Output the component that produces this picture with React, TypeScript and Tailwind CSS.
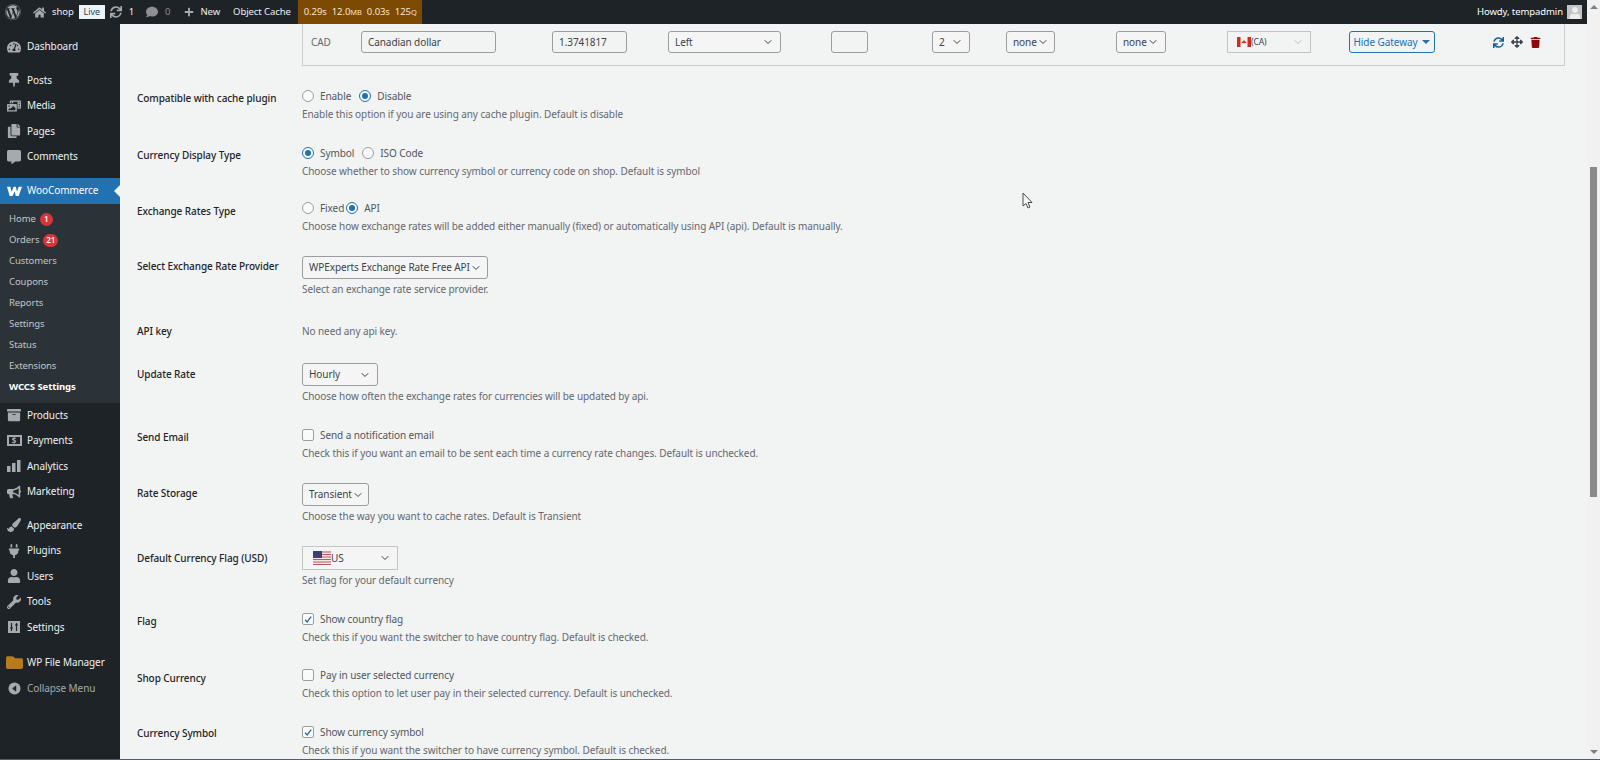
import React from 'react';
import {
  FaWordpress, FaHome, FaSync, FaComment, FaPlus, FaTachometerAlt, FaThumbtack, FaPhotoVideo, FaCopy,
  FaCommentAlt, FaArchive, FaBullhorn, FaPaintBrush, FaPlug, FaUser, FaWrench, FaFolder, FaArrowsAlt, FaTrash,
} from 'react-icons/fa';
import { ChevronDown } from 'lucide-react';

const font = "font-['Noto_Sans','Open_Sans',sans-serif]";

function WooIcon() {
  return (
    <svg viewBox="0 0 18 12" className="w-[15px] h-[10px]" fill="#fff">
      <path d="M0 1 L4 1 L5.5 7 L8 1 L10.6 1 L12 7 L14 1 L18 1 L14 12 L10.6 12 L9.2 6.5 L6.6 12 L3.2 12 Z" />
    </svg>
  );
}

function PaymentsIcon() {
  return (
    <span className="w-[15px] h-[11px] border-2 border-[#a7aaad] flex items-center justify-center text-[8px] leading-none font-bold text-[#a7aaad]">$</span>
  );
}

function BarsIcon() {
  return (
    <svg viewBox="0 0 14 12" className="w-[14px] h-[12px]" fill="#a7aaad">
      <rect x="0" y="6" width="3.5" height="6" />
      <rect x="5" y="3" width="3.5" height="9" />
      <rect x="10" y="0" width="3.5" height="12" />
    </svg>
  );
}

function SlidersIcon() {
  return (
    <svg viewBox="0 0 12 12" className="w-[12px] h-[12px]">
      <rect width="12" height="12" fill="#a7aaad" />
      <path d="M3.5 2v8M8.5 2v8" stroke="#1d2327" strokeWidth="1.2" />
      <path d="M2 7h3M7 4h3" stroke="#1d2327" strokeWidth="1.2" />
    </svg>
  );
}

function CollapseIcon() {
  return (
    <svg viewBox="0 0 14 14" className="w-[13px] h-[13px]">
      <circle cx="7" cy="7" r="6.5" fill="#a7aaad" />
      <path d="M8.8 3.6 L4.6 7 L8.8 10.4 Z" fill="#1d2327" />
    </svg>
  );
}

function MenuItem({ icon, label, dim }: { icon: React.ReactNode; label: string; dim?: boolean }) {
  return (
    <div className={`h-[25.5px] flex items-center text-[10px] ${dim ? 'text-[#a7aaad]' : 'text-[#f0f0f1]'}`}>
      <span className="w-[27px] flex justify-center text-[#a7aaad] text-[14px] pl-[1px]">{icon}</span>
      <span>{label}</span>
    </div>
  );
}

function SubItem({ label, badge, bold }: { label: string; badge?: string; bold?: boolean }) {
  return (
    <div className={`h-[21px] flex items-center pl-[9px] text-[9.5px] ${bold ? 'font-bold text-white' : 'text-[#c3c4c7]'}`}>
      <span>{label}</span>
      {badge && (
        <span className="ml-[4px] h-[13px] min-w-[13px] px-[3px] rounded-full bg-[#d63638] text-white text-[8px] font-semibold flex items-center justify-center">
          {badge}
        </span>
      )}
    </div>
  );
}

function Sidebar() {
  return (
    <aside className="w-[120px] shrink-0 bg-[#1d2327] pt-[10px]">
      <MenuItem icon={<FaTachometerAlt />} label="Dashboard" />
      <div className="h-[8px]" />
      <MenuItem icon={<FaThumbtack />} label="Posts" />
      <MenuItem icon={<FaPhotoVideo />} label="Media" />
      <MenuItem icon={<FaCopy />} label="Pages" />
      <MenuItem icon={<FaCommentAlt />} label="Comments" />
      <div className="h-[8px]" />
      <div className="h-[26px] bg-[#2271b1] flex items-center text-[10px] text-white relative">
        <span className="w-[27px] flex justify-center pl-[1px]"><WooIcon /></span>
        <span>WooCommerce</span>
        <span className="absolute right-0 top-[7px] w-0 h-0 border-y-[6px] border-y-transparent border-r-[6px] border-r-[#f2f3f3]" />
      </div>
      <div className="bg-[#2c3338] pt-[5px] pb-[5px]">
        <SubItem label="Home" badge="1" />
        <SubItem label="Orders" badge="21" />
        <SubItem label="Customers" />
        <SubItem label="Coupons" />
        <SubItem label="Reports" />
        <SubItem label="Settings" />
        <SubItem label="Status" />
        <SubItem label="Extensions" />
        <SubItem label="WCCS Settings" bold />
      </div>
      <MenuItem icon={<FaArchive />} label="Products" />
      <MenuItem icon={<PaymentsIcon />} label="Payments" />
      <MenuItem icon={<BarsIcon />} label="Analytics" />
      <MenuItem icon={<FaBullhorn />} label="Marketing" />
      <div className="h-[8px]" />
      <MenuItem icon={<FaPaintBrush />} label="Appearance" />
      <MenuItem icon={<FaPlug />} label="Plugins" />
      <MenuItem icon={<FaUser />} label="Users" />
      <MenuItem icon={<FaWrench />} label="Tools" />
      <MenuItem icon={<SlidersIcon />} label="Settings" />
      <div className="h-[10px]" />
      <MenuItem icon={<FaFolder className="text-[#b8791f] text-[17px]" />} label="WP File Manager" />
      <MenuItem icon={<CollapseIcon />} label="Collapse Menu" dim />
    </aside>
  );
}

function TopBar() {
  return (
    <header className="h-6 shrink-0 bg-[#1d2327] flex items-center text-[9.5px] text-[#f0f0f1]">
      <FaWordpress className="ml-[5px] text-[#a7aaad] text-[16px]" />
      <FaHome className="ml-[12px] text-[#a7aaad] text-[13px]" />
      <span className="ml-[6px]">shop</span>
      <span className="ml-[5px] h-[14px] w-[26px] bg-[#e9f3f8] text-[#3c434a] text-[9px] flex items-center justify-center">Live</span>
      <FaSync className="ml-[5px] text-[#a7aaad] text-[12px]" />
      <span className="ml-[7px]">1</span>
      <FaComment className="ml-[12px] text-[#8c8f94] text-[12px]" />
      <span className="ml-[7px] text-[#8c8f94]">0</span>
      <FaPlus className="ml-[14px] text-[#a7aaad] text-[10px]" />
      <span className="ml-[6px]">New</span>
      <span className="ml-[13px]">Object Cache</span>
      <div className="ml-[7px] h-6 w-[124px] bg-[#7c4a03] flex items-center pl-[6px] gap-[5px] text-[9.5px] text-[#f6e6c8]">
        <span>0.29s</span>
        <span>12.0<span className="text-[7.5px]">MB</span></span>
        <span>0.03s</span>
        <span>125<span className="text-[7.5px]">Q</span></span>
      </div>
      <div className="ml-auto flex items-center mr-[5px]">
        <span className="text-white">Howdy, tempadmin</span>
        <span className="ml-[4px] w-[15px] h-[14px] bg-[#c3c4c7] flex items-end justify-center overflow-hidden">
          <FaUser className="text-[#eeeeee] text-[12px]" />
        </span>
      </div>
    </header>
  );
}

function Select({ value, className }: { value: React.ReactNode; className: string }) {
  return (
    <div className={`border border-[#9a9da1] rounded-[3px] flex items-center justify-between whitespace-nowrap text-[10px] text-[#3c434a] bg-[#f5f5f5] ${className}`}>
      <span>{value}</span>
      <ChevronDown className="w-3 h-3 shrink-0 text-[#3c434a]" strokeWidth={2} />
    </div>
  );
}

function Radio({ on }: { on?: boolean }) {
  return (
    <span className={`w-[12px] h-[12px] rounded-full border flex items-center justify-center bg-[#fafafa] ${on ? 'border-[#2271b1]' : 'border-[#9a9da1]'}`}>
      {on && <span className="w-[6px] h-[6px] rounded-full bg-[#2271b1]" />}
    </span>
  );
}

function Check({ on, label }: { on?: boolean; label: string }) {
  return (
    <div className="h-[18px] pt-[2px] flex items-center text-[10px] text-[#50575e]">
      <span className="w-[12px] h-[12px] rounded-[2px] border border-[#9a9da1] bg-[#fafafa] flex items-center justify-center">
        {on && (
          <svg viewBox="0 0 12 12" className="w-[11px] h-[11px]">
            <path d="M2.5 6.2 L5 9 L9.8 2.6" fill="none" stroke="#2271b1" strokeWidth="1.7" />
          </svg>
        )}
      </span>
      <span className="ml-[6px]">{label}</span>
    </div>
  );
}

function RadioLine({ items }: { items: { label: string; on?: boolean; gap: string }[] }) {
  return (
    <div className="h-[18px] pt-[2px] flex items-center text-[10px] text-[#50575e]">
      {items.map((it) => (
        <React.Fragment key={it.label}>
          <Radio on={it.on} />
          <span className={`ml-[6px] ${it.gap}`}>{it.label}</span>
        </React.Fragment>
      ))}
    </div>
  );
}

function Desc({ children }: { children: React.ReactNode }) {
  return <p className="h-[20px] leading-[20px] text-[10px] text-[#646970]">{children}</p>;
}

function Row({ label, className, labelClass, children }: { label: string; className: string; labelClass: string; children: React.ReactNode }) {
  return (
    <div className={`flex ${className}`}>
      <div className={`w-[165px] shrink-0 leading-[20px] text-[10px] font-medium text-[#1d2327] ${labelClass}`}>{label}</div>
      <div>{children}</div>
    </div>
  );
}

function CurrencyRow() {
  return (
    <div className="h-[42px] ml-[182px] mr-[22px] border-x border-b border-[#c9cbce] flex items-start pt-[7px] text-[10px] text-[#3c434a]">
      <span className="w-[58px] pl-[8px] h-[22px] flex items-center text-[#646970]">CAD</span>
      <div className="w-[135px] h-[22px] border border-[#9a9da1] rounded-[3px] flex items-center pl-[6px]">Canadian dollar</div>
      <div className="ml-[56px] w-[75px] h-[22px] border border-[#9a9da1] rounded-[3px] flex items-center pl-[6px]">1.3741817</div>
      <Select value="Left" className="ml-[41px] w-[113px] h-[22px] px-[6px]" />
      <div className="ml-[50px] w-[37px] h-[22px] border border-[#9a9da1] rounded-[3px]" />
      <Select value="2" className="ml-[64px] w-[38px] h-[22px] px-[6px]" />
      <Select value="none" className="ml-[36px] w-[49px] h-[22px] px-[6px]" />
      <Select value="none" className="ml-[61px] w-[50px] h-[22px] px-[6px]" />
      <div className="ml-[61px] w-[84px] h-[22px] border border-[#c3c4c7] flex items-center justify-between pl-[9px] pr-[6px] text-[8.5px]">
        <span className="flex items-center">
          <svg viewBox="0 0 14 10" className="w-[14px] h-[10px]">
            <rect width="14" height="10" fill="#f4f4f4" />
            <rect width="3.5" height="10" fill="#d52b1e" />
            <rect x="10.5" width="3.5" height="10" fill="#d52b1e" />
            <path d="M7 2.4 L8.2 5.6 L7 6.8 L5.8 5.6 Z" fill="#d52b1e" />
            <rect x="4.8" y="4.6" width="4.4" height="1.4" fill="#d52b1e" />
          </svg>
          (CA)
        </span>
        <ChevronDown className="w-3 h-3 text-[#a7aaad]" strokeWidth={1.5} />
      </div>
      <div className="ml-[38px] w-[86px] h-[22px] border border-[#2271b1] rounded-[3px] flex items-center justify-center whitespace-nowrap text-[#2271b1]">
        Hide Gateway
        <span className="ml-[5px] w-0 h-0 border-x-[4px] border-x-transparent border-t-[4px] border-t-[#2271b1]" />
      </div>
      <div className="ml-[58px] h-[22px] flex items-center gap-[7px]">
        <FaSync className="text-[#135e96] text-[11px]" />
        <FaArrowsAlt className="text-[#3c434a] text-[12px]" />
        <FaTrash className="text-[#8b0a0a] text-[11px]" />
      </div>
    </div>
  );
}

function Main() {
  return (
    <main className="flex-1 bg-[#f2f3f3] overflow-hidden">
      <CurrencyRow />
      <div className="pl-[17px] pt-[20px]">
        <Row label="Compatible with cache plugin" className="h-[57px]" labelClass="pt-[2px]">
          <RadioLine items={[{ label: 'Enable', gap: 'mr-[8px]' }, { label: 'Disable', on: true, gap: '' }]} />
          <Desc>Enable this option if you are using any cache plugin. Default is disable</Desc>
        </Row>
        <Row label="Currency Display Type" className="h-[55px]" labelClass="pt-[2px]">
          <RadioLine items={[{ label: 'Symbol', on: true, gap: 'mr-[8px]' }, { label: 'ISO Code', gap: '' }]} />
          <Desc>Choose whether to show currency symbol or currency code on shop. Default is symbol</Desc>
        </Row>
        <Row label="Exchange Rates Type" className="h-[58px]" labelClass="pt-[3px]">
          <RadioLine items={[{ label: 'Fixed', gap: 'mr-[2px]' }, { label: 'API', on: true, gap: '' }]} />
          <Desc>Choose how exchange rates will be added either manually (fixed) or automatically using API (api). Default is manually.</Desc>
        </Row>
        <Row label="Select Exchange Rate Provider" className="h-[65px]" labelClass="">
          <Select value="WPExperts Exchange Rate Free API" className="w-[186px] h-[23px] px-[6px]" />
          <Desc>Select an exchange rate service provider.</Desc>
        </Row>
        <Row label="API key" className="h-[42px]" labelClass="">
          <p className="leading-[20px] text-[10px] text-[#646970]">No need any api key.</p>
        </Row>
        <Row label="Update Rate" className="h-[62px]" labelClass="pt-[1px]">
          <Select value="Hourly" className="w-[76px] h-[23px] px-[6px]" />
          <Desc>Choose how often the exchange rates for currencies will be updated by api.</Desc>
        </Row>
        <Row label="Send Email" className="h-[58px]" labelClass="pt-[2px]">
          <Check label="Send a notification email" />
          <Desc>Check this if you want an email to be sent each time a currency rate changes. Default is unchecked.</Desc>
        </Row>
        <Row label="Rate Storage" className="h-[63px]" labelClass="">
          <Select value="Transient" className="w-[67px] h-[23px] px-[6px]" />
          <Desc>Choose the way you want to cache rates. Default is Transient</Desc>
        </Row>
        <Row label="Default Currency Flag (USD)" className="h-[63px]" labelClass="pt-[2px]">
          <div className="w-[96px] h-[24px] border border-[#c3c4c7] bg-[#f5f5f5] flex items-center justify-between pl-[10px] pr-[6px] text-[10px] text-[#3c434a]">
            <span className="flex items-center">
              <svg viewBox="0 0 18 14" className="w-[18px] h-[14px]">
                <rect width="18" height="14" fill="#f1e9e6" />
                <path d="M0 1h18M0 3.5h18M0 6h18M0 8.5h18M0 11h18M0 13.5h18" stroke="#b95a5a" strokeWidth="1" />
                <rect width="9" height="7" fill="#3c3f73" />
              </svg>
              US
            </span>
            <ChevronDown className="w-3 h-3 text-[#3c434a]" strokeWidth={2} />
          </div>
          <Desc>Set flag for your default currency</Desc>
        </Row>
        <Row label="Flag" className="h-[56px]" labelClass="pt-[2px]">
          <Check on label="Show country flag" />
          <Desc>Check this if you want the switcher to have country flag. Default is checked.</Desc>
        </Row>
        <Row label="Shop Currency" className="h-[57px]" labelClass="pt-[3px]">
          <Check label="Pay in user selected currency" />
          <Desc>Check this option to let user pay in their selected currency. Default is unchecked.</Desc>
        </Row>
        <Row label="Currency Symbol" className="h-[40px]" labelClass="pt-[1px]">
          <Check on label="Show currency symbol" />
          <Desc>Check this if you want the switcher to have currency symbol. Default is checked.</Desc>
        </Row>
      </div>
    </main>
  );
}

function Scrollbar() {
  return (
    <div className="w-[13px] shrink-0 bg-[#f1f1f1] flex flex-col items-center">
      <span className="mt-[5px] w-0 h-0 border-x-[4px] border-x-transparent border-b-[4px] border-b-[#808080]" />
      <div className="mt-[158px] w-[7px] h-[330px] bg-[#8a8a8a]" />
      <span className="mt-auto mb-[5px] w-0 h-0 border-x-[4px] border-x-transparent border-t-[4px] border-t-[#808080]" />
    </div>
  );
}

export default function App() {
  return (
    <div className={`relative w-[1600px] h-[760px] overflow-hidden flex flex-col tracking-[-0.08px] ${font}`}>
      <div className="flex-1 flex min-h-0">
        <div className="flex-1 flex flex-col min-w-0">
          <TopBar />
          <div className="flex-1 flex min-h-0">
            <Sidebar />
            <Main />
          </div>
        </div>
        <Scrollbar />
      </div>
      <div className="h-px bg-[#555d66]" />
      {/* mouse cursor from the capture */}
      <svg viewBox="0 0 12 18" className="absolute left-[1022px] top-[192px] w-[12px] h-[18px]">
        <path d="M1 1 L1 14 L4 11.5 L6 16 L8 15 L6 10.5 L10 10.5 Z" fill="#f8f8f8" stroke="#4a4a4a" strokeWidth="1" />
      </svg>
    </div>
  );
}
